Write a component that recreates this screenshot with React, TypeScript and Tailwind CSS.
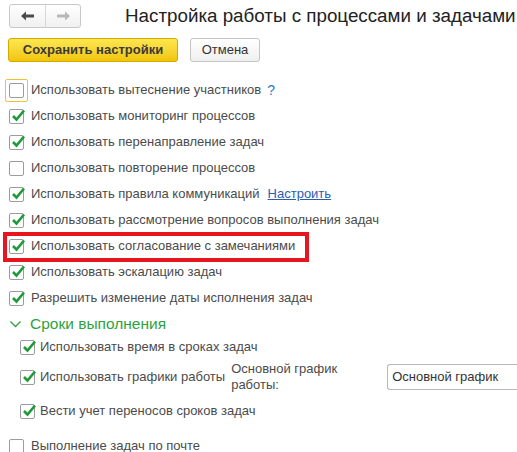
import React from "react";

const font = { fontFamily: '"Liberation Sans", Arial, sans-serif' };

function Check({ checked, focused }: { checked?: boolean; focused?: boolean }) {
  const box = (
    <span className="relative inline-block w-[15px] h-[15px] border border-[#9c9c9c] rounded-[2px] bg-white shrink-0">
      {checked && (
        <svg className="absolute left-[1px] top-[-2px]" width="15" height="15" viewBox="0 0 15 15">
          <path d="M2 8 L5.5 11.5 L13 2.5" fill="none" stroke="#1f9a3a" strokeWidth="2.6" strokeLinecap="butt" strokeLinejoin="miter" />
        </svg>
      )}
    </span>
  );
  if (focused)
    return (
      <span className="inline-flex items-center justify-center w-[23px] h-[23px] border border-[#efc233] rounded-[2px] shrink-0 -ml-[4px] -mr-[4px]">
        {box}
      </span>
    );
  return box;
}

function Row({ checked, focused, text, children }: { checked?: boolean; focused?: boolean; text: string; children?: React.ReactNode }) {
  return (
    <div className="h-[26px] flex items-center pl-[9px]">
      <Check checked={checked} focused={focused} />
      <span className="ml-[7px] text-[13px] text-[#4b4b4b] whitespace-nowrap">{text}</span>
      {children}
    </div>
  );
}

export default function App() {
  return (
    <div className="w-[517px] h-[452px] bg-white overflow-hidden" style={font}>
      <div className="flex items-center pt-[4px] h-[28px]">
        <div className="ml-[9px] flex h-[24px] w-[72px] border border-[#c8c8c8] rounded-[3px] bg-gradient-to-b from-white to-[#f0f0f0] shrink-0">
          <div className="w-[36px] flex items-center justify-center border-r border-[#d8d8d8]">
            <svg width="14" height="10" viewBox="0 0 14 10">
              <path d="M0 5 L5 0.5 L5 3.5 L13 3.5 L13 6.5 L5 6.5 L5 9.5 Z" fill="#4a4a4a" />
            </svg>
          </div>
          <div className="flex-1 flex items-center justify-center">
            <svg width="14" height="10" viewBox="0 0 14 10">
              <path d="M14 5 L9 0.5 L9 3.5 L1 3.5 L1 6.5 L9 6.5 L9 9.5 Z" fill="#b8b8b8" />
            </svg>
          </div>
        </div>
        <div className="ml-[44px] text-[18.8px] text-[#222] whitespace-nowrap">Настройка работы с процессами и задачами</div>
      </div>
      <div className="flex items-center mt-[10px] h-[24px]">
        <div className="ml-[8px] h-[24px] w-[170px] flex items-center justify-center rounded-[3px] border border-[#d2aa00] bg-gradient-to-b from-[#fde74e] to-[#f1c500] text-[13px] font-bold text-[#3a3a3a]">
          Сохранить настройки
        </div>
        <div className="ml-[12px] h-[24px] w-[70px] flex items-center justify-center rounded-[3px] border border-[#c4c4c4] bg-gradient-to-b from-white to-[#efefef] text-[13px] text-[#333]">
          Отмена
        </div>
      </div>
      <div className="mt-[15px]">
        <Row focused text="Использовать вытеснение участников">
          <span className="ml-[6px] text-[14px] text-[#2a7cc7]">?</span>
        </Row>
        <Row checked text="Использовать мониторинг процессов" />
        <Row checked text="Использовать перенаправление задач" />
        <Row text="Использовать повторение процессов" />
        <Row checked text="Использовать правила коммуникаций">
          <span className="ml-[8px] text-[13px] text-[#2a5db0] underline">Настроить</span>
        </Row>
        <Row checked text="Использовать рассмотрение вопросов выполнения задач" />
        <div className="relative">
          <Row checked text="Использовать согласование с замечаниями" />
          <div className="absolute left-[3px] top-[-1px] w-[306px] h-[30px] border-[4px] border-[#e8141e] pointer-events-none" />
        </div>
        <Row checked text="Использовать эскалацию задач" />
        <Row checked text="Разрешить изменение даты исполнения задач" />
        <div className="h-[26px] flex items-center pl-[10px]">
          <svg width="11" height="7" viewBox="0 0 11 7">
            <path d="M0.5 0.5 L5.5 5.5 L10.5 0.5" fill="none" stroke="#2ea23d" strokeWidth="1.3" />
          </svg>
          <span className="ml-[9px] text-[15.5px] text-[#2ea23d] whitespace-nowrap">Сроки выполнения</span>
        </div>
        <div className="pl-[20px]">
          <div className="h-[20px] flex items-center">
            <Check checked />
            <span className="ml-[5px] text-[13px] text-[#4b4b4b] whitespace-nowrap">Использовать время в сроках задач</span>
          </div>
          <div className="h-[40px] flex items-center">
            <Check checked />
            <span className="ml-[5px] text-[13px] text-[#4b4b4b] whitespace-nowrap">Использовать графики работы</span>
            <span className="ml-[6px] w-[110px] text-[13px] leading-[16px] text-[#4b4b4b]">Основной график работы:</span>
            <div className="ml-[46px] h-[26px] flex-1 border border-[#b9b9b9] border-r-0 rounded-l-[3px] flex items-center pl-[4px] text-[13px] text-[#333] whitespace-nowrap">
              Основной график
            </div>
          </div>
          <div className="h-[28px] flex items-center">
            <Check checked />
            <span className="ml-[5px] text-[13px] text-[#4b4b4b] whitespace-nowrap">Вести учет переносов сроков задач</span>
          </div>
        </div>
        <div className="mt-[8px]">
          <Row text="Выполнение задач по почте" />
        </div>
      </div>
    </div>
  );
}
